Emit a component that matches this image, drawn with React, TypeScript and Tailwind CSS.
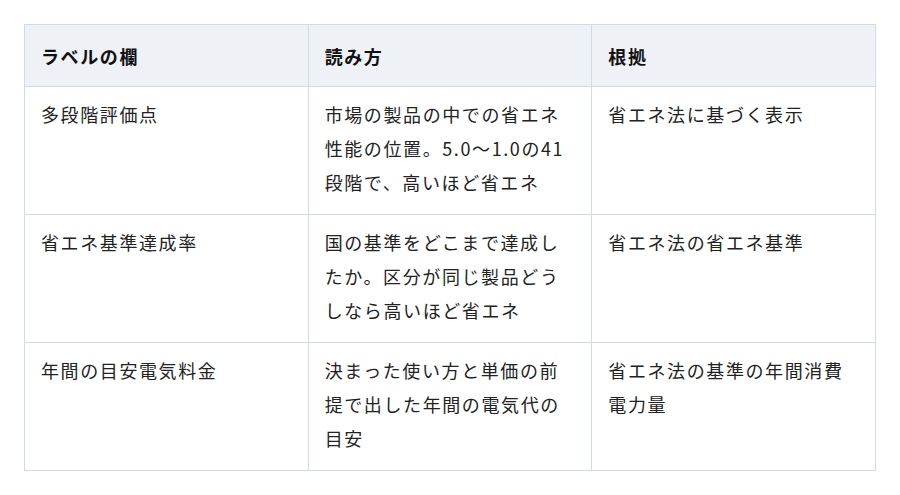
const rows: [string, string, string][] = [
  ["多段階評価点", "市場の製品の中での省エネ性能の位置。5.0〜1.0の41段階で、高いほど省エネ", "省エネ法に基づく表示"],
  ["省エネ基準達成率", "国の基準をどこまで達成したか。区分が同じ製品どうしなら高いほど省エネ", "省エネ法の省エネ基準"],
  ["年間の目安電気料金", "決まった使い方と単価の前提で出した年間の電気代の目安", "省エネ法の基準の年間消費電力量"],
];

export default function App() {
  return (
    <div className="bg-white p-6 text-[18px] leading-[34px] tracking-[1.6px] text-[#222]" style={{ fontFamily: '"Noto Sans CJK JP", "Noto Sans", sans-serif' }}>
      <table className="w-[852px] table-fixed border-collapse border border-[#d3dbe2]">
        <thead>
          <tr className="bg-[#eef2f6]">
            {["ラベルの欄", "読み方", "根拠"].map((h) => (
              <th key={h} className="h-[62px] border border-[#d3dbe2] px-4 py-[13px] text-left font-bold text-[#111]">{h}</th>
            ))}
          </tr>
        </thead>
        <tbody>
          {rows.map((r) => (
            <tr key={r[0]}>
              {r.map((c, i) => (
                <td key={i} className="h-[127px] border border-[#d3dbe2] px-4 pt-[10px] pb-[15px] align-top">{c}</td>
              ))}
            </tr>
          ))}
        </tbody>
      </table>
    </div>
  );
}
